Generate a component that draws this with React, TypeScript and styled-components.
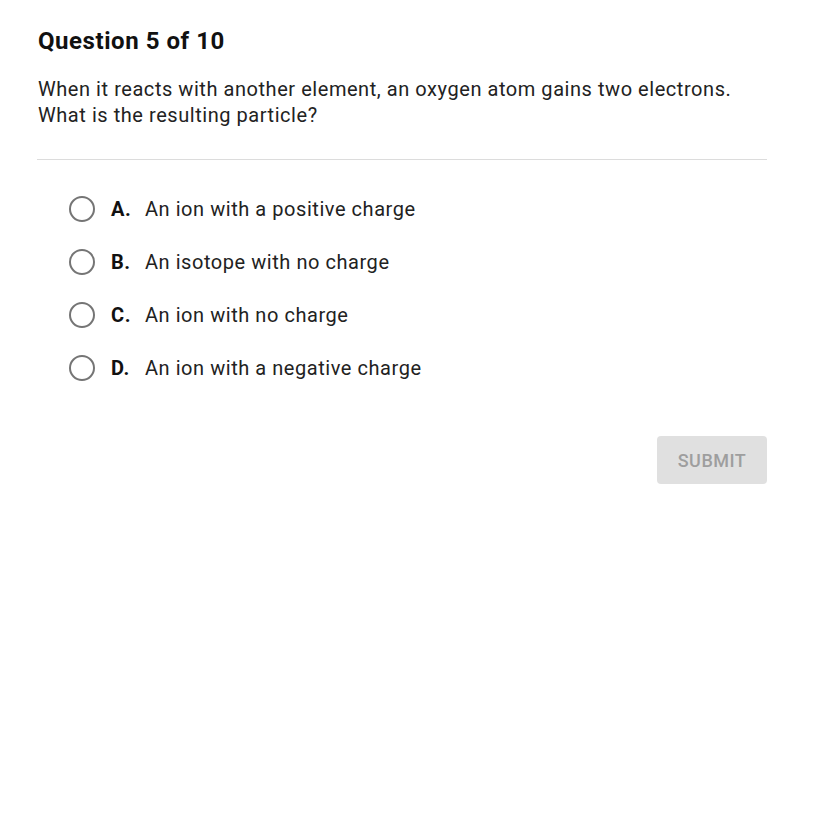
import React from "react";
import styled, { createGlobalStyle } from "styled-components";

const GlobalStyle = createGlobalStyle`
	body {
		margin: 0;
		background: #ffffff;
		font-family: Roboto, "Liberation Sans", sans-serif;
		color: #212121;
	}
`;

const options = [
	{ letter: "A.", text: "An ion with a positive charge" },
	{ letter: "B.", text: "An isotope with no charge" },
	{ letter: "C.", text: "An ion with no charge" },
	{ letter: "D.", text: "An ion with a negative charge" },
];

const App = () => {
	return (
		<>
			<GlobalStyle />
			<Page>
				<Title>Question 5 of 10</Title>
				<Prompt>
					When it reacts with another element, an oxygen atom gains two electrons.
					<br />
					What is the resulting particle?
				</Prompt>
				<Divider />
				<Options>
					{options.map((o) => (
						<Option key={o.letter}>
							<Radio />
							<Letter>{o.letter}</Letter>
							<OptionText>{o.text}</OptionText>
						</Option>
					))}
				</Options>
				<Footer>
					<SubmitButton disabled>SUBMIT</SubmitButton>
				</Footer>
			</Page>
		</>
	);
};

export default App;

const Page = styled.div`
	width: 729px;
	padding: 26px 0 0 38px;
	letter-spacing: 0.55px;
`;

const Title = styled.h1`
	margin: 0;
	font-size: 24px;
	font-weight: 700;
	line-height: 30px;
	color: #111111;
`;

const Prompt = styled.p`
	margin: 20px 0 0;
	font-size: 20px;
	line-height: 26px;
	color: #222222;
`;

const Divider = styled.hr`
	margin: 31px 0 0 -1px;
	border: none;
	border-top: 1px solid #dcdcdc;
	height: 0;
`;

const Options = styled.div`
	display: flex;
	flex-direction: column;
	gap: 17px;
	padding: 31px 0 0 31px;
`;

const Option = styled.div`
	display: flex;
	align-items: center;
	height: 36px;
`;

const Radio = styled.span`
	width: 22px;
	height: 22px;
	border: 2.5px solid #757575;
	border-radius: 50%;
	box-sizing: content-box;
	flex-shrink: 0;
`;

const Letter = styled.span`
	margin-left: 16px;
	width: 34px;
	font-size: 20px;
	font-weight: 700;
	color: #111111;
`;

const OptionText = styled.span`
	font-size: 20px;
	color: #222222;
`;

const Footer = styled.div`
	display: flex;
	justify-content: flex-end;
	margin-top: 50px;
`;

const SubmitButton = styled.button`
	width: 110px;
	height: 48px;
	border: none;
	border-radius: 4px;
	background: #e0e0e0;
	color: #9e9e9e;
	font-family: Roboto, "Liberation Sans", sans-serif;
	font-size: 18px;
	font-weight: 500;
	letter-spacing: 0.5px;
`;
